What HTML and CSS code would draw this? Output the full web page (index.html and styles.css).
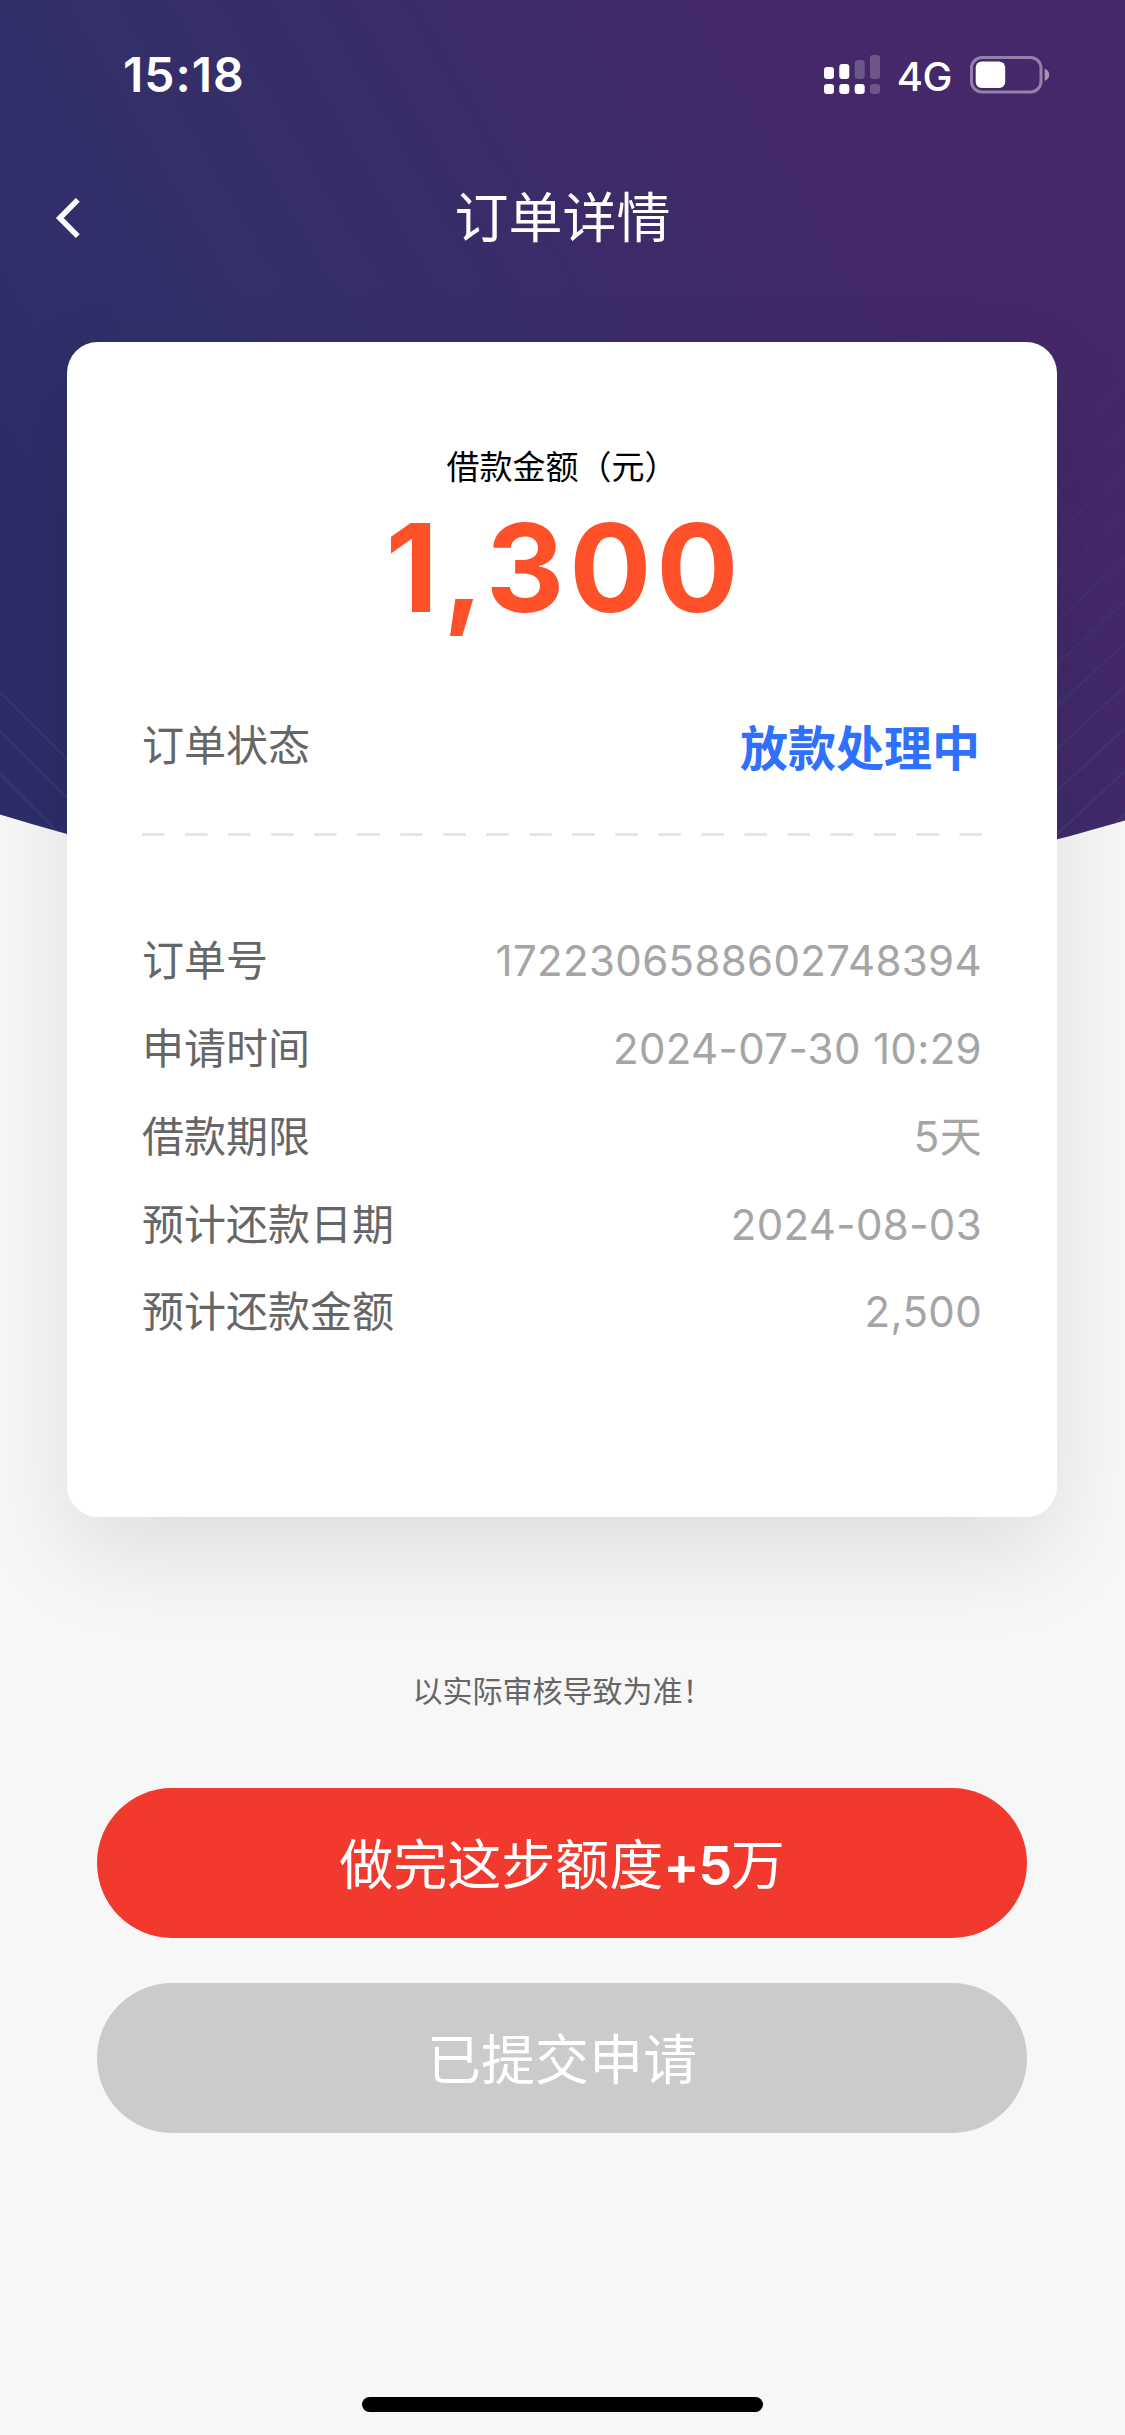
FILE: index.html
```html
<!DOCTYPE html>
<html lang="zh-CN">
<head>
<meta charset="utf-8">
<title>订单详情</title>
<link rel="stylesheet" href="styles.css">
</head>
<body>
<div class="page">
  <svg class="backdrop" viewBox="0 0 1125 910" aria-hidden="true">
    <defs>
      <linearGradient id="sky" gradientUnits="userSpaceOnUse" x1="40" y1="480" x2="800" y2="40">
        <stop offset="0" stop-color="#2d2d69"/>
        <stop offset=".25" stop-color="#323069"/>
        <stop offset=".55" stop-color="#382d68"/>
        <stop offset=".8" stop-color="#402a68"/>
        <stop offset="1" stop-color="#442869"/>
      </linearGradient>
      <linearGradient id="fade" x1="0" y1="0" x2="0" y2="1">
        <stop offset=".35" stop-color="#fff" stop-opacity="0"/>
        <stop offset=".95" stop-color="#fff"/>
      </linearGradient>
      <mask id="fadeMask"><rect width="1125" height="910" fill="url(#fade)"/></mask>
      <clipPath id="arc"><path d="M0 0H1125V820.500Q562 988 0 814.500Z"/></clipPath>
    </defs>
    <g clip-path="url(#arc)">
      <rect width="1125" height="910" fill="url(#sky)"/>
      <g mask="url(#fadeMask)" fill="none" stroke="#3f4a80" stroke-width="2" stroke-opacity=".5">
        <path d="M0 692l70 70M0 731l70 70M0 774l70 70"/>
        <path d="M1055 403l72-66M1055 448l72-66M1055 493l72-66M1055 535l72-67M1055 579l72-67M1055 623l72-67M1055 666l72-67M1055 708l72-67M1055 751l72-67M1055 793l72-67M1055 836l72-67M1055 879l72-67"/>
      </g>
    </g>
  </svg>

  <div class="status-bar">
    <span class="clock">15:18</span>
    <div class="indicators">
      <svg class="signal" viewBox="0 0 56 40" width="56" height="40" fill="#fff">
        <rect x="0" y="12" width="10" height="12" rx="3"/>
        <rect x="15.300" y="9" width="10" height="15" rx="3"/>
        <rect x="30.700" y="5" width="10" height="19" rx="3" opacity=".22"/>
        <rect x="46" y="0" width="10" height="24" rx="3" opacity=".22"/>
        <rect x="0" y="29" width="10" height="10" rx="3"/>
        <rect x="15.300" y="29" width="10" height="10" rx="3"/>
        <rect x="30.700" y="29" width="10" height="10" rx="3"/>
        <rect x="46" y="29" width="10" height="10" rx="3" opacity=".22"/>
      </svg>
      <span class="network">4G</span>
      <svg class="battery" viewBox="0 0 80 38" width="80" height="38">
        <rect x="1.500" y="1.500" width="69.500" height="34.500" rx="10.500" fill="none" stroke="#fff" stroke-width="3" opacity=".42"/>
        <rect x="5.700" y="5.500" width="29.500" height="26.500" rx="6" fill="#fff"/>
        <path d="M74.700 12.500q4.500 2 4.500 6.200t-4.500 6.200z" fill="#fff" opacity=".5"/>
      </svg>
    </div>
  </div>

  <header class="nav">
    <svg class="back" viewBox="0 0 26 40" width="26" height="40" fill="none" stroke="#fff" stroke-width="5.500">
      <path d="M22.800 1.900L4.800 20L22.800 38.100"/>
    </svg>
    <h1 class="title">订单详情</h1>
  </header>

  <main class="card">
    <p class="amount-label">借款金额（元）</p>
    <p class="amount">1,300</p>
    <div class="row status-row">
      <span class="label">订单状态</span>
      <span class="status">放款处理中</span>
    </div>
    <svg class="divider" viewBox="0 0 840 3" width="840" height="3">
      <path d="M0 1.500H840" stroke="#e5e5e5" stroke-width="3" stroke-dasharray="22.500 20.530"/>
    </svg>
    <div class="details">
      <div class="row"><span class="label">订单号</span><span class="value">1722306588602748394</span></div>
      <div class="row"><span class="label">申请时间</span><span class="value">2024-07-30 10:29</span></div>
      <div class="row"><span class="label">借款期限</span><span class="value">5天</span></div>
      <div class="row"><span class="label">预计还款日期</span><span class="value">2024-08-03</span></div>
      <div class="row"><span class="label">预计还款金额</span><span class="value">2,500</span></div>
    </div>
  </main>

  <p class="note">以实际审核导致为准！</p>
  <div class="actions">
    <button class="button primary">做完这步额度<b>+5</b>万</button>
    <button class="button disabled" disabled>已提交申请</button>
  </div>
  <div class="home-indicator"></div>
</div>
</body>
</html>
```
FILE: styles.css
```css
* { box-sizing: border-box; }
body, h1, p { margin: 0; }
body { background: #f7f7f7; }

.page {
  position: relative;
  display: flex;
  flex-direction: column;
  align-items: center;
  width: 1125px;
  height: 2435px;
  overflow: hidden;
  background: #f7f7f7;
  font-family: Inter, "Noto Sans CJK SC", sans-serif;
}

.backdrop {
  position: absolute;
  top: 0;
  left: 0;
  width: 1125px;
  height: 910px;
}

.status-bar {
  position: relative;
  display: flex;
  justify-content: space-between;
  width: 100%;
  height: 132px;
  padding: 0 75px 0 123px;
  color: #fff;
}
.clock {
  margin-top: 45px;
  font-size: 48px;
  font-weight: 600;
  line-height: 60px;
  letter-spacing: 1px;
}
.indicators { display: flex; margin-top: 55px; }
.network {
  margin: -4px 18px 0 17px;
  font-size: 40px;
  font-weight: 500;
  line-height: 52px;
  letter-spacing: -.5px;
}
.battery { margin-top: 1px; }

.nav {
  position: relative;
  display: grid;
  grid-template-columns: 80px 1fr 80px;
  align-items: center;
  width: 100%;
  height: 171px;
  color: #fff;
}
.back { margin-left: 55px; }
.title {
  padding-top: 2px;
  font-size: 54px;
  font-weight: 400;
  line-height: 72px;
  text-align: center;
}

.card {
  position: relative;
  width: 990px;
  height: 1175px;
  margin: 39px 1px 0 0;
  padding: 101px 75px 0;
  border-radius: 31px;
  background: #fff;
  box-shadow: 0 36px 96px rgba(0, 0, 0, .1);
}
.amount-label {
  font-size: 33px;
  line-height: 48px;
  text-align: center;
  color: #000;
}
.amount {
  height: 150px;
  padding-left: 5px;
  font-size: 122px;
  font-weight: 700;
  line-height: 154px;
  letter-spacing: 4.800px;
  text-align: center;
  color: #ff5129;
}
.row {
  display: flex;
  justify-content: space-between;
  align-items: center;
}
.label { padding-bottom: 6px; font-size: 42px; color: #666; }
.status-row { height: 72px; margin-top: 67px; }
.status-row .label { padding-bottom: 4px; }
.status {
  padding: 1px 2px 0 0;
  font-size: 48px;
  font-weight: 700;
  color: #2f70ff;
}
.divider { display: block; margin-top: 53px; }
.details { margin-top: 81px; }
.details .row { height: 87.750px; }
.value {
  padding-top: 1px;
  font-size: 42px;
  line-height: 60px;
  letter-spacing: .350px;
  color: #a5a5a5;
}

.note {
  margin-top: 152px;
  font-size: 30px;
  line-height: 44px;
  color: #666;
}
.actions {
  display: flex;
  flex-direction: column;
  gap: 45px;
  margin: 75px 1px 0 0;
}
.button {
  width: 930px;
  height: 150px;
  padding: 0 0 4px;
  border: 0;
  border-radius: 75px;
  color: #fff;
  font-family: inherit;
  font-size: 54px;
}
.button b { font-weight: 600; letter-spacing: -1.500px; }
.primary { background: #f2392e; }
.disabled { background: #cbcbcb; }

.home-indicator {
  width: 401px;
  height: 15px;
  margin-top: 264px;
  border-radius: 8px;
  background: #000;
}
```
